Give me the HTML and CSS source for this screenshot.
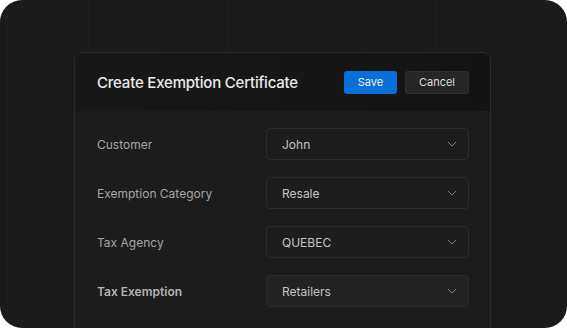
FILE: index.html
```html
<!DOCTYPE html>
<html>
<head>
    <title>Create Exemption Certificate</title>
    <link rel="stylesheet" href="styles.css">
</head>
<body>
<div class="frame">
    <div class="modal">
        <div class="modal-head">
            <h2 class="title">Create Exemption Certificate</h2>
            <div class="actions">
                <button class="btn btn-save">Save</button>
                <button class="btn btn-cancel">Cancel</button>
            </div>
        </div>
        <div class="modal-body">
            <div class="row">
                <label class="label">Customer</label>
                <div class="select"><span>John</span><svg class="chev" width="10" height="6" viewBox="0 0 10 6"><path d="M1 1l4 4 4-4" fill="none" stroke="#7c7c7c" stroke-width="1"/></svg></div>
            </div>
            <div class="row">
                <label class="label">Exemption Category</label>
                <div class="select"><span>Resale</span><svg class="chev" width="10" height="6" viewBox="0 0 10 6"><path d="M1 1l4 4 4-4" fill="none" stroke="#7c7c7c" stroke-width="1"/></svg></div>
            </div>
            <div class="row">
                <label class="label">Tax Agency</label>
                <div class="select"><span>QUEBEC</span><svg class="chev" width="10" height="6" viewBox="0 0 10 6"><path d="M1 1l4 4 4-4" fill="none" stroke="#7c7c7c" stroke-width="1"/></svg></div>
            </div>
            <div class="row">
                <label class="label label-bold">Tax Exemption</label>
                <div class="select select-active"><span>Retailers</span><svg class="chev" width="10" height="6" viewBox="0 0 10 6"><path d="M1 1l4 4 4-4" fill="none" stroke="#7c7c7c" stroke-width="1"/></svg></div>
            </div>
        </div>
    </div>
</div>
</body>
</html>
```

FILE: styles.css
```css
* {
    padding: 0;
    margin: 0;
    box-sizing: border-box;
}

body {
    background-color: #ffffff;
    font-family: Inter, "Noto Sans", sans-serif;
}

.frame {
    width: 567px;
    height: 328px;
    border-radius: 22px;
    overflow: hidden;
    padding: 52px 0 0 74px;
    background-color: #1b1b1b;
    background-image: repeating-linear-gradient(90deg, transparent 0, transparent 68.4px, #1f1f1f 68.4px, #1f1f1f 69.4px);
    background-position: 20px 0;
}

.modal {
    width: 417px;
    height: 300px;
    border: 1px solid #2c2c2c;
    border-radius: 8px;
    background-color: #1c1c1c;
    overflow: hidden;
}

.modal-head {
    height: 58px;
    display: flex;
    align-items: center;
    justify-content: space-between;
    padding: 0 21px 0 22px;
    background: linear-gradient(90deg, #181818 0%, #141414 100%);
}

.title {
    font-size: 15px;
    font-weight: 500;
    color: #ececec;
    letter-spacing: -0.2px;
}

.actions {
    display: flex;
    gap: 8px;
}

.btn {
    height: 23px;
    border-radius: 3px;
    font-family: Inter, "Noto Sans", sans-serif;
    font-size: 11px;
    color: #f0f0f0;
    cursor: pointer;
    outline: none;
}

.btn-save {
    width: 53px;
    border: none;
    background-color: #0a6fd6;
}

.btn-cancel {
    width: 64px;
    border: 1px solid #303030;
    background-color: #262626;
    color: #dcdcdc;
}

.modal-body {
    padding: 17px 21px 0 22px;
    display: flex;
    flex-direction: column;
    gap: 17px;
}

.row {
    display: flex;
    align-items: center;
}

.label {
    width: 169px;
    font-size: 12px;
    color: #a6a6a6;
}

.label-bold {
    font-weight: 600;
    color: #b4b4b4;
}

.select {
    width: 203px;
    height: 32px;
    display: flex;
    align-items: center;
    justify-content: space-between;
    padding: 0 11px 0 15px;
    border: 1px solid #2d2d2d;
    border-radius: 4px;
    background-color: #1d1d1d;
    font-size: 12px;
    color: #c4c4c4;
}

.select-active {
    background-color: #222222;
}
```
